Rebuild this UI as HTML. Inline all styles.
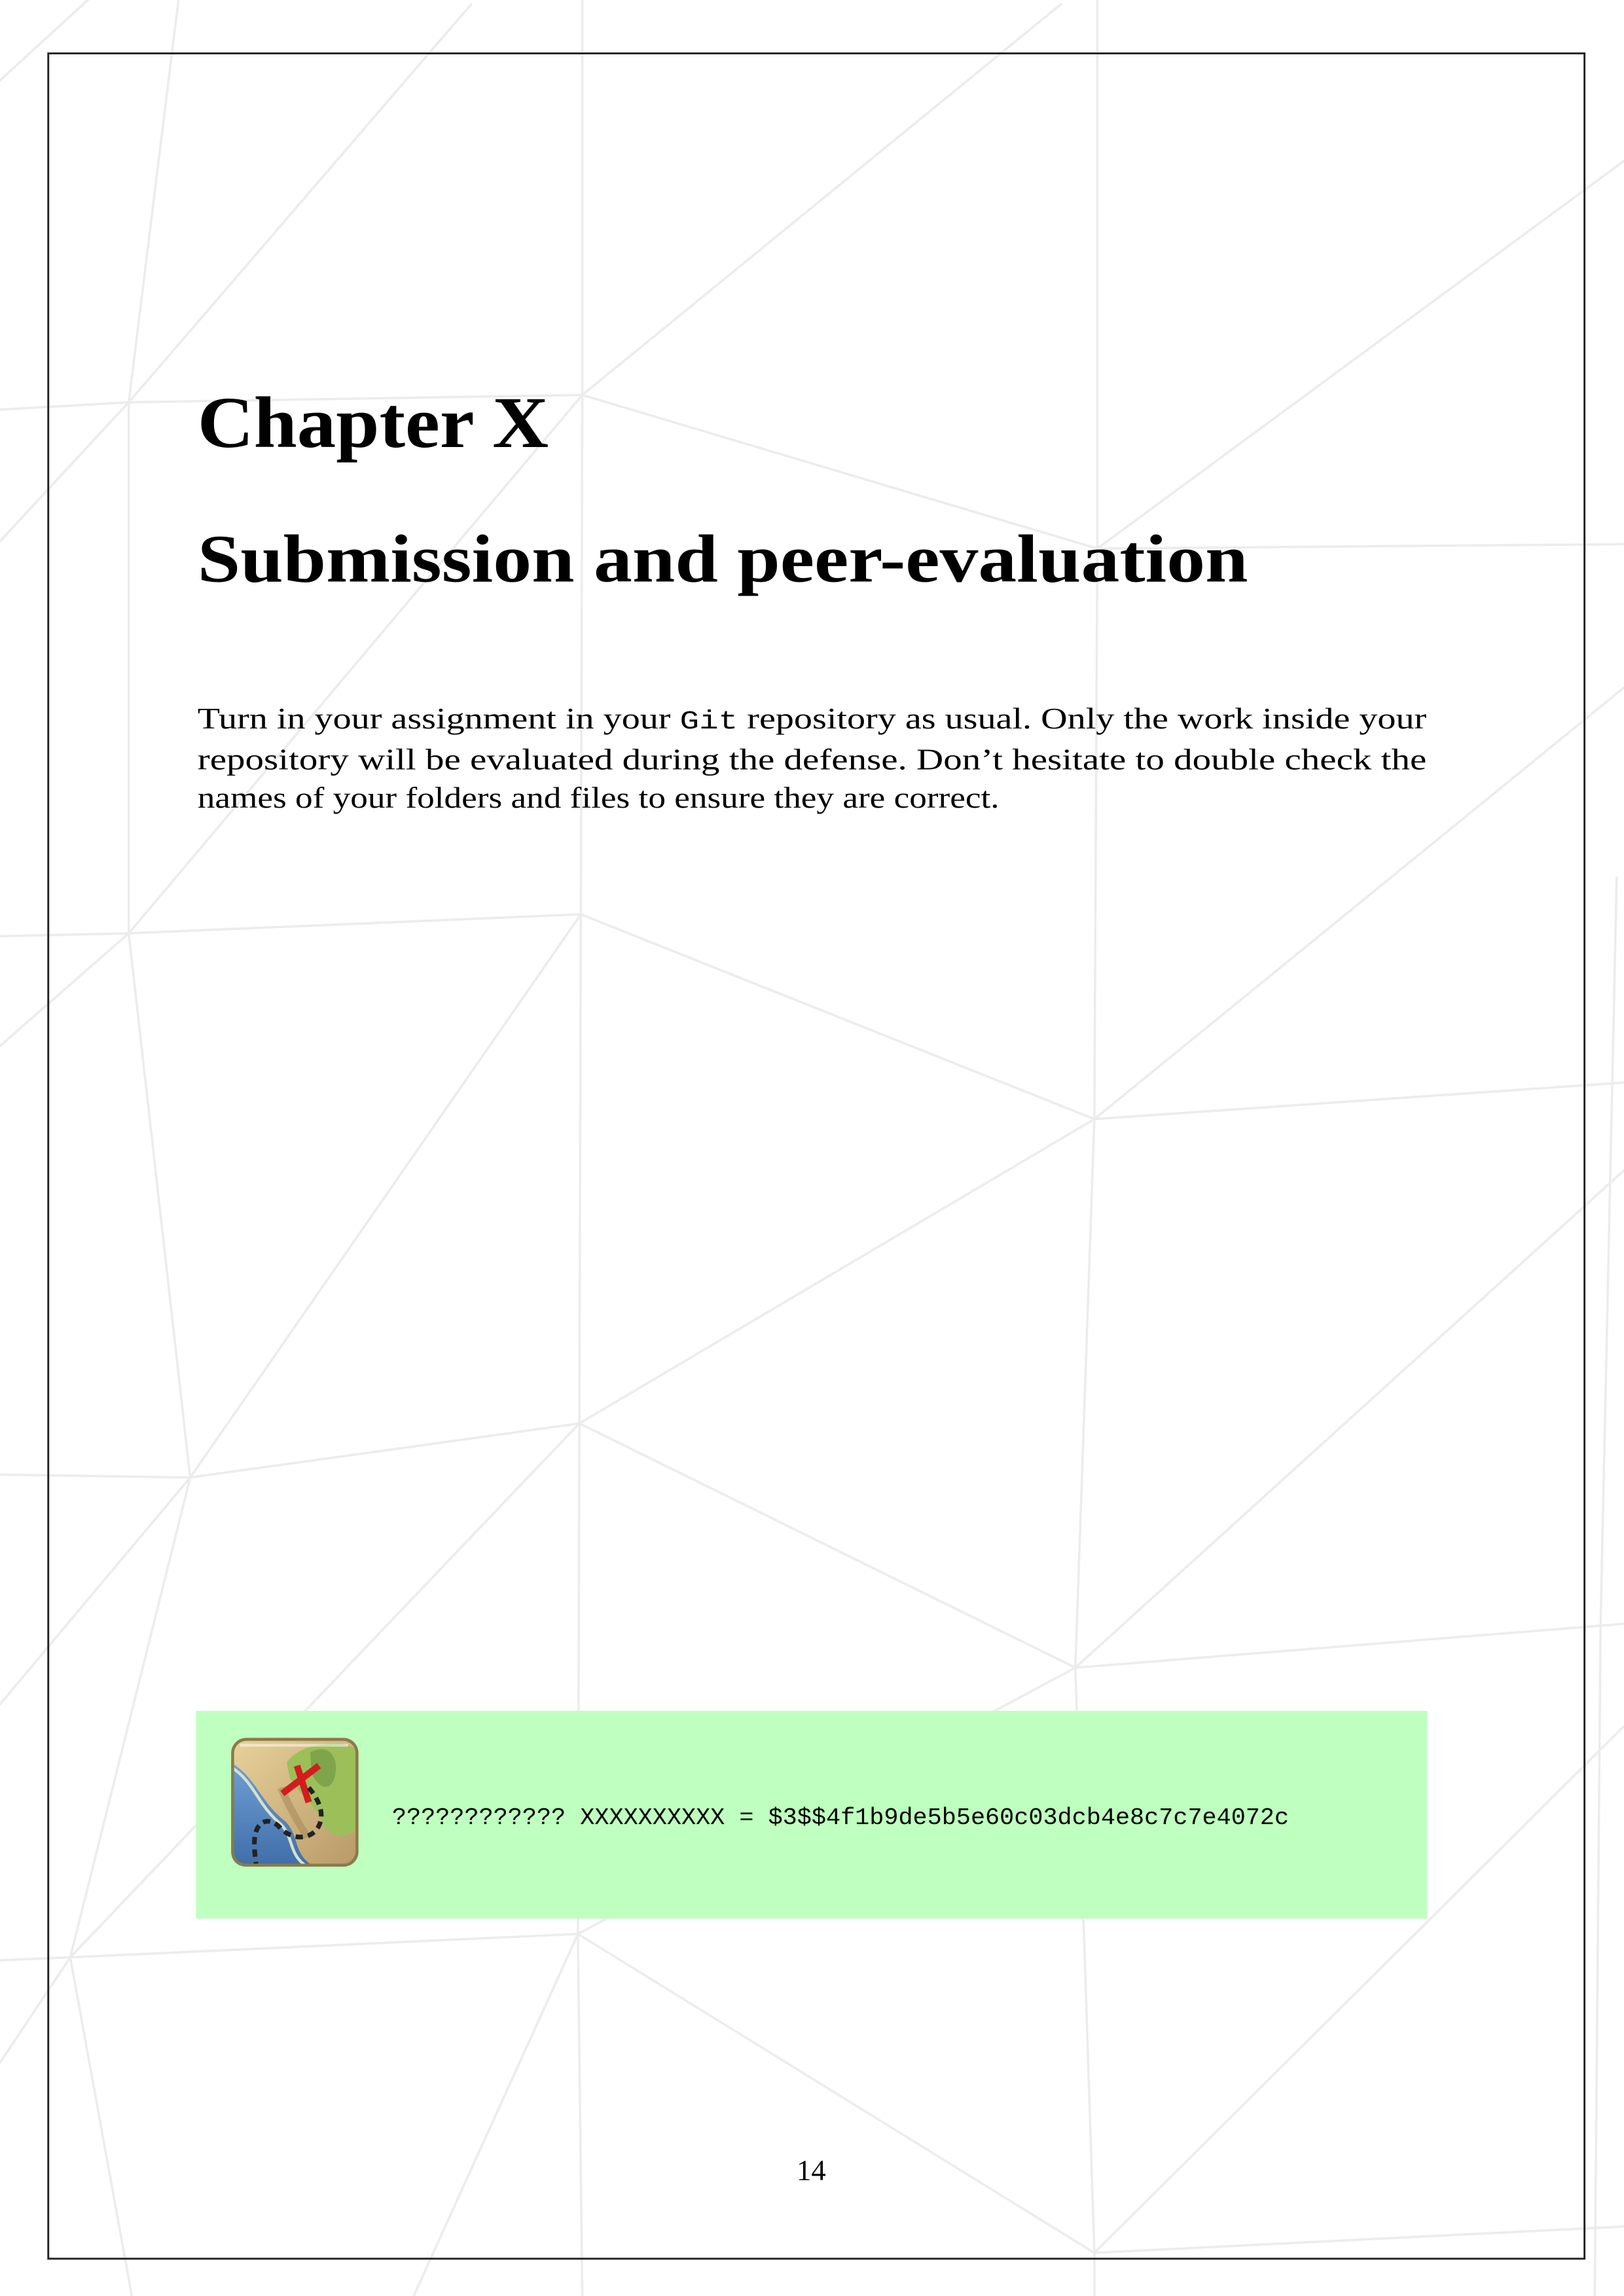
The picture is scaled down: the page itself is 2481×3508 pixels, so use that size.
<!DOCTYPE html>
<html><head><meta charset="utf-8">
<style>
html,body{margin:0;padding:0;background:#fff;}
svg{display:block;width:2481px;height:3508px;}
</style></head>
<body>
<svg viewBox="0 0 1110 1569.5" preserveAspectRatio="none" xmlns="http://www.w3.org/2000/svg" xml:space="preserve">
<rect width="1110" height="1570" fill="#fff"/>
<g stroke="#ececec" stroke-width="1.6" fill="none" stroke-linecap="round">
<polyline points="122,0 88,275 88,638 130,1010 48,1338 90,1569"/>
<polyline points="398,0 398,270 397,625 396,973 395,1322 398,1569"/>
<polyline points="750,0 750,375 748,765 735,1140 748,1540 748,1569"/>
<polyline points="1105,600 1094,1110 1090,1569"/>
<polyline points="0,280 88,275 398,270 750,375 1110,372"/>
<polyline points="0,640 88,638 397,625 748,765 1110,740"/>
<polyline points="0,1008 130,1010 396,973 735,1140 1110,1110"/>
<polyline points="0,1340 48,1338 395,1322 748,1540 1110,1522"/>
<line x1="88" y1="275" x2="322" y2="3"/>
<line x1="398" y1="270" x2="725" y2="3"/>
<line x1="0" y1="55" x2="60" y2="0"/>
<line x1="88" y1="275" x2="0" y2="370"/>
<line x1="398" y1="270" x2="88" y2="638"/>
<line x1="88" y1="638" x2="0" y2="715"/>
<line x1="397" y1="625" x2="130" y2="1010"/>
<line x1="750" y1="375" x2="1110" y2="110"/>
<line x1="748" y1="765" x2="396" y2="973"/>
<line x1="748" y1="765" x2="1110" y2="470"/>
<line x1="130" y1="1010" x2="0" y2="1165"/>
<line x1="396" y1="973" x2="48" y2="1338"/>
<line x1="735" y1="1140" x2="1110" y2="800"/>
<line x1="735" y1="1140" x2="395" y2="1322"/>
<line x1="48" y1="1338" x2="0" y2="1410"/>
<line x1="395" y1="1322" x2="283" y2="1569"/>
<line x1="748" y1="1540" x2="1110" y2="1180"/>
</g>
<rect x="33" y="36.5" width="1050" height="1507.5" fill="none" stroke="#222" stroke-width="1.3"/>

<g font-family="'Liberation Serif', serif" fill="#000">
<text x="135" y="305.6" font-size="50" font-weight="bold" textLength="240" lengthAdjust="spacingAndGlyphs">Chapter X</text>
<text x="135" y="397.5" font-size="46.5" font-weight="bold" textLength="718" lengthAdjust="spacingAndGlyphs">Submission and peer-evaluation</text>
<text x="135" y="498" font-size="20.5" textLength="840" lengthAdjust="spacingAndGlyphs">Turn in your assignment in your <tspan font-family="'Liberation Mono', monospace" font-size="18">Git</tspan> repository as usual.  Only the work inside your</text>
<text x="135" y="526" font-size="20.5" textLength="840" lengthAdjust="spacingAndGlyphs">repository will be evaluated during the defense.  Don’t hesitate to double check the</text>
<text x="135" y="552" font-size="20.5" textLength="548" lengthAdjust="spacingAndGlyphs">names of your folders and files to ensure they are correct.</text>
<text x="554.5" y="1490" font-size="20" text-anchor="middle">14</text>
</g>

<rect x="134" y="1169.5" width="841.5" height="142" fill="#bfffbf"/>
<defs>
<linearGradient id="land" x1="0" y1="0" x2="1" y2="1">
<stop offset="0" stop-color="#e8d29a"/><stop offset="1" stop-color="#b89968"/>
</linearGradient>
<linearGradient id="sea" x1="0" y1="0" x2="0" y2="1">
<stop offset="0" stop-color="#6f9fd4"/><stop offset="1" stop-color="#3f6ea8"/>
</linearGradient>
<clipPath id="ic"><rect x="158" y="1188" width="87" height="88" rx="10"/></clipPath>
</defs>
<g clip-path="url(#ic)">
<rect x="158" y="1188" width="87" height="88" fill="url(#land)"/>
<path d="M158,1205 C175,1215 178,1232 195,1245 C205,1255 200,1268 215,1276 L158,1276 Z" fill="url(#sea)"/>
<path d="M158,1208 C174,1218 176,1234 192,1247 C201,1256 197,1268 210,1276" stroke="#d8e0c8" stroke-width="2" fill="none"/>
<path d="M196,1205 C205,1190 240,1188 245,1198 L245,1248 C236,1260 224,1255 220,1245 C214,1232 203,1225 198,1215 Z" fill="#9cbf5a"/>
<path d="M212,1198 C222,1192 232,1198 229,1214 C226,1226 217,1222 213,1212 Z" fill="#7fa44a"/>
<path d="M192,1222 C198,1236 204,1246 210,1256" stroke="#a88a5e" stroke-width="5" fill="none" opacity=".6"/>
</g>
<path d="M193,1226 L218,1207 M203,1207 L211,1232" stroke="#d41c1c" stroke-width="4.5"/>
<path d="M211,1222 C218,1230 222,1240 218,1248 C213,1258 200,1258 192,1250 C186,1243 178,1243 175,1252 C173,1258 174,1266 175,1274" stroke="#222" stroke-width="3.2" fill="none" stroke-dasharray="5,3.5"/>
<rect x="159" y="1189" width="85" height="86" rx="9.5" fill="none" stroke="#8a7a4a" stroke-width="2"/>
<path d="M164,1193 L238,1193" stroke="#fff" stroke-width="2" opacity=".5"/>

<text x="268" y="1247" font-family="'Liberation Mono', monospace" font-size="16" fill="#000" textLength="613" lengthAdjust="spacingAndGlyphs">????????????  XXXXXXXXXX = $3$$4f1b9de5b5e60c03dcb4e8c7c7e4072c</text>
</svg>
</body></html>
